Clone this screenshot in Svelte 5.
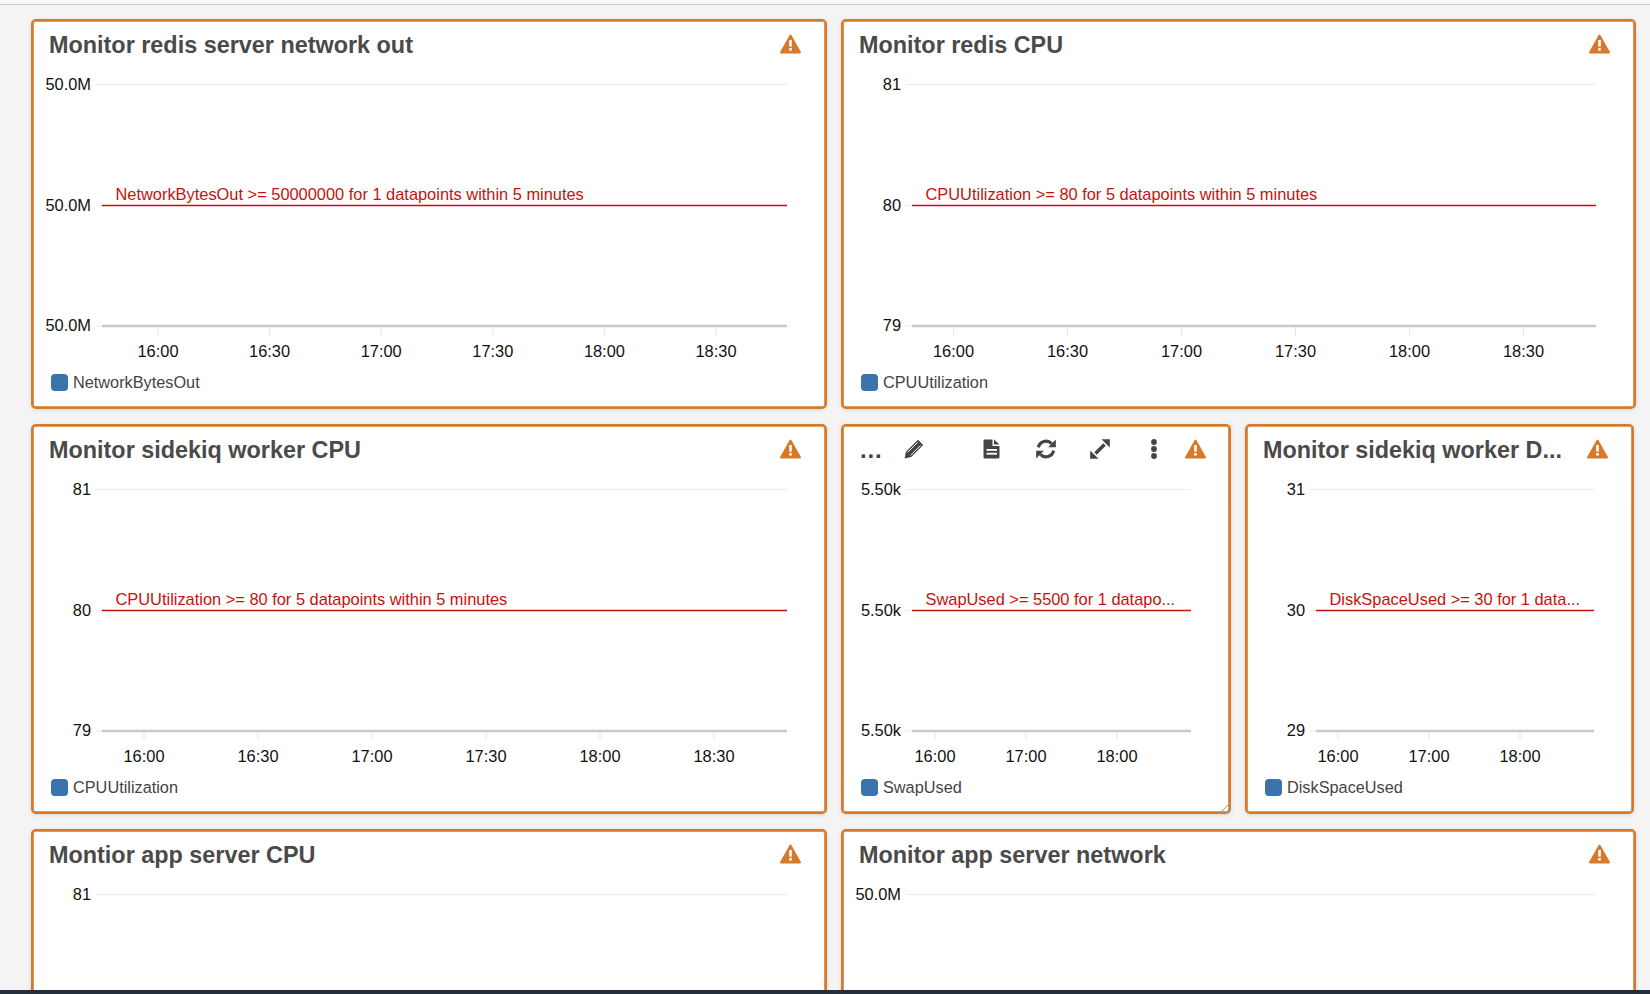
<script>
  const t30 = ['16:00', '16:30', '17:00', '17:30', '18:00', '18:30'];
  const t60 = ['16:00', '17:00', '18:00'];
  const seq = (start, step, n) => Array.from({ length: n }, (_, i) => start + step * i);

  const first = {
    title: 'Monitor redis server network out', labels: ['50.0M', '50.0M', '50.0M'],
    alarm: 'NetworkBytesOut >= 50000000 for 1 datapoints within 5 minutes', legend: 'NetworkBytesOut',
    times: t30, ticks: seq(127, 111.6, 6), width: 796
  };
  const second = {
    title: 'Monitor redis CPU', labels: ['81', '80', '79'],
    alarm: 'CPUUtilization >= 80 for 5 datapoints within 5 minutes', legend: 'CPUUtilization',
    times: t30, ticks: seq(112.5, 114, 6), width: 795
  };
  const third = {
    title: 'Monitor sidekiq worker CPU', labels: ['81', '80', '79'],
    alarm: 'CPUUtilization >= 80 for 5 datapoints within 5 minutes', legend: 'CPUUtilization',
    times: t30, ticks: seq(113, 114, 6), width: 796
  };
  const swap = {
    title: '...', labels: ['5.50k', '5.50k', '5.50k'],
    alarm: 'SwapUsed >= 5500 for 1 datapo...', legend: 'SwapUsed',
    times: t60, ticks: seq(94, 91, 3), width: 390, toolbar: true, handle: true
  };
  const disk = {
    title: 'Monitor sidekiq worker D...', labels: ['31', '30', '29'],
    alarm: 'DiskSpaceUsed >= 30 for 1 data...', legend: 'DiskSpaceUsed',
    times: t60, ticks: seq(93, 91, 3), width: 389
  };
  const appCpu = { title: 'Montior app server CPU', labels: ['81'], alarm: '', legend: '', times: [], ticks: [], width: 796 };
  const appNet = { title: 'Monitor app server network', labels: ['50.0M'], alarm: '', legend: '', times: [], ticks: [], width: 795 };
</script>

{#snippet warn()}
  <svg class="warn" viewBox="0 0 21 20" width="21" height="20">
    <path d="M10.5 1.5 L20 18.5 H1 Z" fill="#d8792a" stroke="#d8792a" stroke-width="2" stroke-linejoin="round" />
    <rect x="9.2" y="6" width="2.6" height="6.6" fill="#fff" />
    <rect x="9.2" y="14" width="2.6" height="2.6" fill="#fff" />
  </svg>
{/snippet}

{#snippet card(c)}
  <section class="card" style="width:{c.width}px">
    {#if c.toolbar}
      <header class="head tools">
        <span class="dots-title">...</span>
        <svg class="tool pencil" viewBox="0 0 20 20" width="20" height="20">
          <path d="M14 0.8 L19.2 6 L7.2 18 L0.6 19.4 L2 12.8 Z" fill="#444" />
          <path d="M3.6 13.4 L13.6 3.4 M6.6 16.4 L16.6 6.4" stroke="#fff" stroke-width="0.9" />
        </svg>
        <svg class="tool doc" viewBox="0 0 17 20" width="17" height="20">
          <path d="M1.5 0.5 H9.5 V7 H16.5 V18 Q16.5 19.5 15 19.5 H1.5 Q0.5 19.5 0.5 18 V2 Q0.5 0.5 1.5 0.5 Z" fill="#444" />
          <path d="M11 0.5 L16.5 5.6 H11 Z" fill="#444" />
          <rect x="3.5" y="10" width="10.5" height="1.8" fill="#fff" />
          <rect x="3.5" y="13.8" width="10.5" height="1.8" fill="#fff" />
        </svg>
        <svg class="tool sync" viewBox="0 0 20 20" width="20" height="20">
          <path d="M2.4 8.4 A7.8 7.8 0 0 1 15.6 4.6" fill="none" stroke="#444" stroke-width="3.2" />
          <path d="M19.8 0.6 V8.2 H12.2 Z" fill="#444" />
          <path d="M17.6 11.6 A7.8 7.8 0 0 1 4.4 15.4" fill="none" stroke="#444" stroke-width="3.2" />
          <path d="M0.2 19.4 V11.8 H7.8 Z" fill="#444" />
        </svg>
        <svg class="tool expand" viewBox="0 0 20 20" width="20" height="20">
          <path d="M11.5 0.2 H19.8 V8.5 Z" fill="#444" />
          <path d="M8.5 19.8 H0.2 V11.5 Z" fill="#444" />
          <path d="M14.5 5.5 L5.5 14.5" stroke="#444" stroke-width="3.6" />
        </svg>
        <svg class="tool more" viewBox="0 0 6 20" width="6" height="20">
          <circle cx="3" cy="3" r="2.9" fill="#444" />
          <circle cx="3" cy="10" r="2.9" fill="#444" />
          <circle cx="3" cy="17" r="2.9" fill="#444" />
        </svg>
        {@render warn()}
      </header>
    {:else}
      <header class="head">
        <h2>{c.title}</h2>
        {@render warn()}
      </header>
    {/if}

    <svg class="chart" width={c.width - 4} height="296">
      <line class="grid" x1="63" x2={c.width - 42} y1="15.5" y2="15.5" />
      <line class="grid" x1="63" x2="69" y1="136.5" y2="136.5" />
      <line class="grid" x1="63" x2="69" y1="257" y2="257" />
      {#each c.labels as label, i}
        <text class="ylabel" x="58" y={[21, 142, 262][i]}>{label}</text>
      {/each}
      <line class="axis" x1="69" x2={c.width - 42} y1="257" y2="257" />
      {#each c.ticks as tick, i}
        <line class="tick" x1={tick - 2} x2={tick - 2} y1="258" y2="266" />
        <text class="xlabel" x={tick - 2} y="288">{c.times[i]}</text>
      {/each}
      {#if c.alarm}
        <line class="alarm-line" x1="69" x2={c.width - 42} y1="136.5" y2="136.5" />
        <text class="alarm" x="82.5" y="131">{c.alarm}</text>
      {/if}
    </svg>

    {#if c.legend}
      <div class="legend"><i class="swatch"></i><span>{c.legend}</span></div>
    {/if}
    {#if c.handle}
      <svg class="handle" viewBox="0 0 14 14" width="14" height="14">
        <path d="M1 13 L13 1 M7 13 L13 7" stroke="#999" stroke-width="1" />
      </svg>
    {/if}
  </section>
{/snippet}

<div class="page">
  <div class="top"></div>
  <main class="board">
    {@render card(first)}
    {@render card(second)}
    {@render card(third)}
    <div class="pair">
      {@render card(swap)}
      {@render card(disk)}
    </div>
    {@render card(appCpu)}
    {@render card(appNet)}
  </main>
  <div class="bottom"></div>
</div>

<style>
  :global(body) {
    margin: 0;
    overflow: hidden;
    background: #f4f4f4;
  }
  .page {
    position: relative;
    height: 994px;
    overflow: hidden;
    background: #f4f4f4;
    font-family: "Liberation Sans", Arial, sans-serif;
  }
  .top {
    height: 4px;
    background: #f6f6f6;
    border-bottom: 1px solid #c9c9c9;
  }
  .board {
    display: grid;
    grid-template-columns: 796px 795px;
    column-gap: 14px;
    row-gap: 15px;
    padding: 14px 0 0 31px;
  }
  .pair {
    display: flex;
    gap: 14px;
  }
  .card {
    position: relative;
    box-sizing: border-box;
    height: 390px;
    background: #fff;
    border: 2px solid #d8792a;
    border-radius: 5px;
    box-shadow: 0 1px 4px rgba(0, 0, 0, 0.12), inset 0 0 0 0.8px #d8792a;
  }
  .head {
    display: flex;
    align-items: center;
    justify-content: space-between;
    height: 48px;
    padding: 0 24px 0 16px;
  }
  h2 {
    margin: 0;
    font-size: 23.4px;
    line-height: 49px;
    font-weight: 700;
    color: #4a4a4a;
    white-space: nowrap;
  }
  .warn {
    flex: none;
    margin-bottom: 3px;
  }
  .tools {
    position: relative;
    justify-content: flex-start;
    padding-left: 17px;
  }
  .dots-title {
    width: 45px;
    flex: none;
    font-size: 24px;
    line-height: 48px;
    font-weight: 700;
    letter-spacing: 0.8px;
    color: #444;
  }
  .tool {
    flex: none;
    margin-bottom: 3px;
  }
  .pencil { margin-left: -1px; }
  .doc { margin-left: 59px; }
  .sync { margin-left: 36px; }
  .expand { margin-left: 34px; }
  .more { margin-left: 41px; }
  .tools .warn { margin-left: 28px; }
  .chart {
    display: block;
    font-size: 16.4px;
  }
  .grid {
    stroke: #ebebeb;
    stroke-width: 1;
  }
  .axis {
    stroke: #c9c9c9;
    stroke-width: 2.4;
  }
  .tick {
    stroke: #e4e4e4;
    stroke-width: 1;
  }
  .alarm-line {
    stroke: #c4130c;
    stroke-width: 1.4;
  }
  .ylabel {
    fill: #111;
    text-anchor: end;
  }
  .xlabel {
    fill: #111;
    text-anchor: middle;
  }
  .alarm {
    fill: #c4130c;
  }
  .legend {
    display: flex;
    align-items: center;
    gap: 5px;
    margin-top: 7px;
    padding-left: 18px;
    height: 20px;
    font-size: 16.3px;
    color: #444;
  }
  .swatch {
    width: 17px;
    height: 17px;
    border-radius: 4px;
    background: #3b74ad;
  }
  .handle {
    position: absolute;
    right: -3px;
    bottom: -3px;
  }
  .bottom {
    position: absolute;
    left: 0;
    right: 0;
    bottom: 0;
    height: 4px;
    background: #232f3e;
  }
</style>
